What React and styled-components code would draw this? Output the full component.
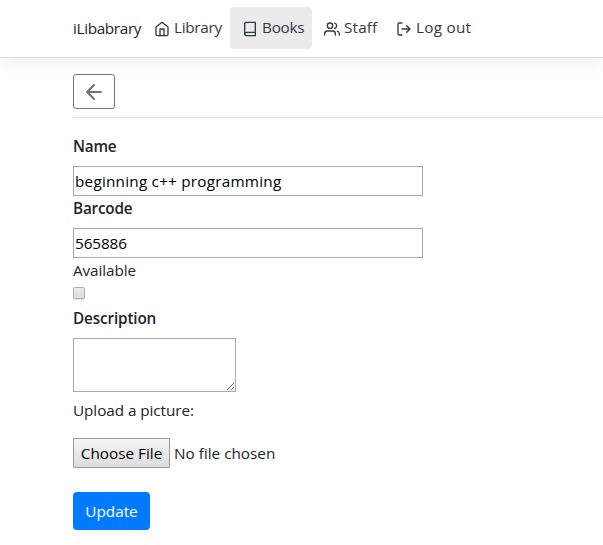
import React from "react";
import styled, { createGlobalStyle } from "styled-components";

const GlobalStyle = createGlobalStyle`
  *, *::before, *::after { box-sizing: border-box; }
  html, body { margin: 0; background: #fff; overflow: hidden; }
  body, button, input, textarea {
    font-family: "Open Sans", "Noto Sans", sans-serif;
    font-size: 15.3px;
    font-weight: 400;
    line-height: 24px;
  }
  body { color: #212529; }
`;

const Page = styled.div`
  width: 603px;
  height: 545px;
  overflow: hidden;
`;

const Navbar = styled.header`
  display: flex;
  align-items: flex-start;
  height: 58px;
  padding: 7px 0 0 73px;
  border-bottom: 1px solid #dcdfe0;
  box-shadow: 0 8px 16px rgba(0, 0, 0, 0.05);
`;

const Brand = styled.a`
  width: 73px;
  padding-top: 9px;
  white-space: nowrap;
`;

const Nav = styled.nav`
  display: flex;
`;

const NavLink = styled.a`
  display: flex;
  align-items: flex-start;
  width: ${(p) => p.$width}px;
  height: 42px;
  padding: 8px 0 0 ${(p) => p.$inset || 8}px;
  border-radius: 4px;
  background: ${(p) => (p.$active ? "#ebebeb" : "transparent")};
  color: #343a40;
  white-space: nowrap;
`;

const Icon = styled.svg`
  flex: none;
  width: ${(p) => p.$size || 16}px;
  height: ${(p) => p.$size || 16}px;
  fill: none;
  stroke: currentColor;
  stroke-width: 2;
  stroke-linecap: round;
  stroke-linejoin: round;
`;

const NavIcon = styled(Icon)`
  margin: 6px 4px 0 0;
`;

const Text = styled.span`
  letter-spacing: ${(p) => p.$track || 0}px;
  white-space: pre;
`;

const Main = styled.main`
  padding: 16px 0 0 73px;
`;

const Toolbar = styled.div`
  height: 44px;
  border-bottom: 1px solid #dee2e6;
`;

const BackButton = styled.button`
  display: flex;
  align-items: center;
  justify-content: center;
  width: 42px;
  height: 35px;
  padding: 0;
  border: 1px solid #6c757d;
  border-radius: 3px;
  background: transparent;
  color: #6c757d;
`;

const Form = styled.form`
  display: flex;
  flex-direction: column;
  align-items: flex-start;
  padding-top: 16px;
`;

const Label = styled.label`
  height: ${(p) => p.$height || 32}px;
  font-weight: ${(p) => (p.$strong ? 600 : 400)};
`;

const TextInput = styled.input`
  width: 350px;
  height: 30px;
  padding: 1px;
  border: 1px solid #a9a9a9;
  border-radius: 0;
  outline: none;
  background: #fff;
  color: #000;
  letter-spacing: ${(p) => p.$track || 0}px;
`;

const Checkbox = styled.input.attrs({ type: "checkbox" })`
  appearance: none;
  width: 12px;
  height: 12px;
  margin: 5px 0 7px;
  border: 1px solid #adadad;
  border-radius: 2px;
  background: linear-gradient(#ececec, #dcdcdc);
  box-shadow: 0 1px 1px #e4e4e4;
`;

const TextArea = styled.textarea`
  width: 163px;
  height: 54px;
  margin-bottom: 6px;
  padding: 2px;
  border: 1px solid #a9a9a9;
  outline: none;
  resize: both;
`;

const FileRow = styled.div`
  display: flex;
  align-items: center;
  gap: 4px;
  height: 30px;
  margin-top: 8px;
`;

const FileButton = styled.button`
  width: 97px;
  height: 30px;
  padding: 0;
  border: 1px solid #999;
  border-radius: 1px;
  background: linear-gradient(#f6f6f6, #dcdcdc);
  color: #000;
  white-space: nowrap;
`;

const SubmitButton = styled.button`
  width: 77px;
  height: 38px;
  margin-top: 24px;
  padding: 0;
  border: 0;
  border-radius: 4px;
  background: #007bff;
  color: #fff;
`;

const links = [
  {
    label: "Library",
    width: 84,
    track: -0.3,
    icon: (
      <>
        <path d="M3 9l9-7 9 7v11a2 2 0 0 1-2 2H5a2 2 0 0 1-2-2z" />
        <path d="M9 22V12h6v10" />
      </>
    ),
  },
  {
    label: "Books",
    width: 82,
    inset: 12,
    track: -0.25,
    active: true,
    icon: (
      <>
        <path d="M4 19.5A2.5 2.5 0 0 1 6.5 17H20" />
        <path d="M6.5 2H20v20H6.5A2.5 2.5 0 0 1 4 19.5v-15A2.5 2.5 0 0 1 6.5 2z" />
      </>
    ),
  },
  {
    label: "Staff",
    width: 72,
    inset: 12,
    track: 0.15,
    icon: (
      <>
        <path d="M17 21v-2a4 4 0 0 0-4-4H5a4 4 0 0 0-4 4v2" />
        <circle cx="9" cy="7" r="4" />
        <path d="M23 21v-2a4 4 0 0 0-3-3.87M16 3.13a4 4 0 0 1 0 7.75" />
      </>
    ),
  },
  {
    label: "Log out",
    width: 94,
    inset: 12,
    track: 0.25,
    icon: (
      <>
        <path d="M9 21H5a2 2 0 0 1-2-2V5a2 2 0 0 1 2-2h4" />
        <path d="M16 17l5-5-5-5M21 12H9" />
      </>
    ),
  },
];

export default function App() {
  return (
    <Page>
      <GlobalStyle />
      <Navbar>
        <Brand>
          <Text $track={-0.35}>iLibabrary</Text>
        </Brand>
        <Nav>
          {links.map((l) => (
            <NavLink key={l.label} $width={l.width} $inset={l.inset} $active={l.active}>
              <NavIcon viewBox="0 0 24 24">{l.icon}</NavIcon>
              <Text $track={l.track}>{l.label}</Text>
            </NavLink>
          ))}
        </Nav>
      </Navbar>
      <Main>
        <Toolbar>
          <BackButton type="button" aria-label="Back">
            <Icon $size={24} viewBox="0 0 24 24">
              <path d="M19 12H5M12 19l-7-7 7-7" />
            </Icon>
          </BackButton>
        </Toolbar>
        <Form>
          <Label $strong><Text $track={-0.2}>Name</Text></Label>
          <TextInput $track={0.22} defaultValue="beginning c++ programming" />
          <Label $strong><Text $track={-0.2}>Barcode</Text></Label>
          <TextInput $track={-0.1} defaultValue="565886" />
          <Label $height={24}><Text $track={-0.1}>Available</Text></Label>
          <Checkbox />
          <Label $strong><Text $track={-0.15}>Description</Text></Label>
          <TextArea />
          <Label><Text $track={-0.07}>Upload a picture:</Text></Label>
          <FileRow>
            <FileButton type="button"><Text>Choose File</Text></FileButton>
            <Text>No file chosen</Text>
          </FileRow>
          <SubmitButton type="button"><Text>Update</Text></SubmitButton>
        </Form>
      </Main>
    </Page>
  );
}
